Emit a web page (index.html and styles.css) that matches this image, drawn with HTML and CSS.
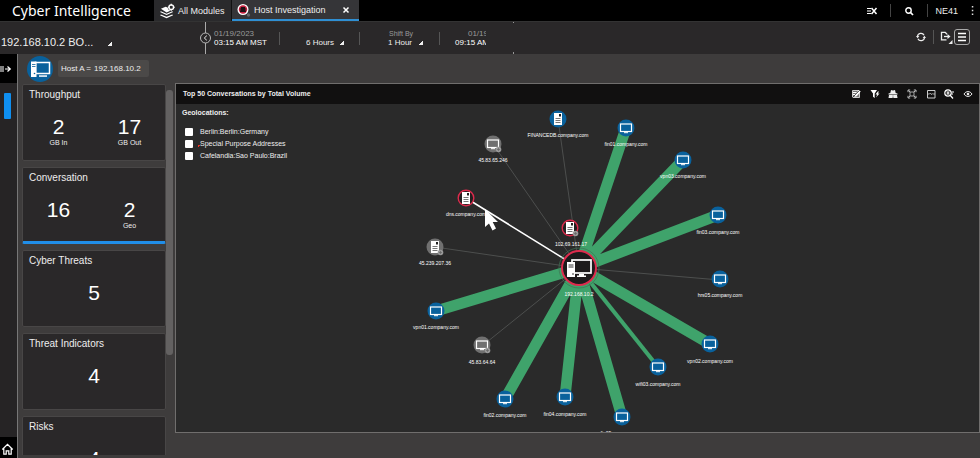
FILE: index.html
```html
<!DOCTYPE html>
<html lang="en">
<head>
<meta charset="utf-8">
<title>Cyber Intelligence</title>
<link rel="stylesheet" href="styles.css">
</head>
<body>
<div class="app">
  <header class="topbar">
    <h1 class="brand">Cyber Intelligence</h1>
    <nav class="tabs">
      <a class="tab" href="#modules">
        <svg class="tab-icon" viewBox="0 0 16 16"><path d="M1 5.500 6 3.500l2 .8a4 4 0 0 0 3.500 3.200L7 9.500zM1 8.300l6 2.600 6-2.600 1 .9-7 3.100-7-3.100zM1 11.600l6 2.600 6-2.600 1 .9L7 15.800 0 12.500z" fill="#fff"/><circle cx="12" cy="4" r="2.500" fill="none" stroke="#fff" stroke-width="1.500"/><path d="M12 .3v2M12 5.700v2M8.300 4h2M13.700 4h2" stroke="#fff" stroke-width="1.300"/></svg>
        <span>All Modules</span>
      </a>
      <a class="tab tab-current" href="#host">
        <svg class="host-icon" viewBox="0 0 14 14"><circle cx="6" cy="6.500" r="5.500" fill="#fff"/><circle cx="6" cy="6.500" r="4.200" fill="#c61f3f"/><path d="M3 9c0-1.300.5-2 1-2.300V4h4v2.700c.5.300 1 1 1 2.300z" fill="#1d1014"/><path d="M2.800 6h6.400" stroke="#1d1014"/><circle cx="11.500" cy="12" r="1.700" fill="#65656a"/></svg>
        <span>Host Investigation</span>
      </a>
      <button class="tab-close" aria-label="Close tab"><svg viewBox="0 0 8 8"><path d="m1.500 1.500 5 5m0-5-5 5" stroke="#fff" stroke-width="1.500"/></svg></button>
    </nav>
    <div class="top-actions">
      <button aria-label="Clear list"><svg class="i-clear" viewBox="0 0 12 8"><path d="M1 1.500h4M1 4h4M1 6.500h4" stroke="#fff" stroke-width="1.100"/><path d="m5.500 1 5 6m0-6-5 6" stroke="#fff" stroke-width="1.500"/></svg></button>
      <button class="search" aria-label="Search"><svg class="i10" viewBox="0 0 10 10"><circle cx="4.500" cy="4.500" r="2.700" fill="none" stroke="#fff" stroke-width="1.400"/><path d="m6.500 6.500 2.500 2.500" stroke="#fff" stroke-width="1.700"/></svg></button>
      <span class="user">NE41</span>
      <button class="kebab" aria-label="More"><svg viewBox="0 0 3 11"><path d="M.8 1h1.500v1.500H.8zM.8 4.700h1.500v1.500H.8zM.8 8.400h1.500v1.500H.8z" fill="#ddd"/></svg></button>
    </div>
  </header>

  <div class="toolbar">
    <select class="corner host-select" aria-label="Host"><option>192.168.10.2 BO...</option></select>
    <div class="timeline">
      <button class="time-back" aria-label="Earlier"><svg viewBox="0 0 12 32"><path d="M5.500 0v11M5.500 21v11" stroke="#aaa"/><circle cx="5.500" cy="16" r="5" fill="none" stroke="#bbb"/><path d="M6.800 13.700 4.300 16l2.500 2.300" fill="none" stroke="#eee"/></svg></button>
      <div class="stamp"><span>01/19/2023</span><b>03:15 AM MST</b></div>
      <div class="range"><select class="corner" aria-label="Duration"><option>6 Hours</option></select></div>
      <div class="range shift"><label for="shift">Shift By</label><select class="corner" id="shift"><option>1 Hour</option></select></div>
      <div class="stamp stamp-end"><div class="stamp-text"><span>01/19/2023</span><b>09:15 AM MST</b></div></div>
      <div class="time-edge"></div>
    </div>
    <div class="tool-actions">
      <button aria-label="Refresh"><svg class="i10" viewBox="0 0 10 10"><path d="M1.500 4.500a3.500 3.500 0 0 1 6.600-1.300M8.500 5.500a3.500 3.500 0 0 1-6.600 1.300" fill="none" stroke="#eee" stroke-width="1.200"/><path d="M0 4h3.300L1.600 6.300zM10 6H6.700l1.700-2.300z" fill="#eee"/></svg></button>
      <button class="export" aria-label="Export"><svg viewBox="0 0 13 14"><path d="M6.500 9.800H1.500v-7.500h3.700l1.800 2" fill="none" stroke="#eee" stroke-width="1.300"/><path d="M4 6.500h4.500" stroke="#eee" stroke-width="1.300"/><path d="m7.500 4 3 2.500-3 2.500zM12.500 10v4h-4z" fill="#eee"/></svg></button>
      <button class="menu" aria-label="Menu"><svg viewBox="0 0 10 10"><path d="M1 1.500h8M1 5h8M1 8.500h8" stroke="#fff" stroke-width="1.500"/></svg></button>
    </div>
  </div>

  <div class="workspace">
    <aside class="rail">
      <button class="rail-toggle" aria-label="Expand"><svg viewBox="0 0 12 8"><path d="M0 2h4M0 4h4M0 6h4" stroke="#fff" stroke-width="1.200"/><path d="M5 4h5M7.500 1.500 10.300 4 7.500 6.500" fill="none" stroke="#fff" stroke-width="1.200"/></svg></button>
      <span class="rail-mark"></span>
      <a class="rail-home" href="#home" aria-label="Home"><svg viewBox="0 0 12 12"><path d="M.8 6.500 6 1.300l5.200 5.200M2.300 5.500v5.700h2.400V7.800h2.600v3.400h2.400V5.500" fill="none" stroke="#fff" stroke-width="1.200"/></svg></a>
    </aside>

    <main class="main">
      <div class="crumbs">
        <svg class="crumb-icon" viewBox="0 0 26 26"><circle cx="13" cy="13" r="13" fill="#09619c"/><rect x="8.500" y="6.500" width="14" height="11" fill="#09619c" stroke="#fff" stroke-width="1.500"/><path d="M12 19.300h8v1.500h-8z" fill="#fff"/><path d="M4 5.500h5.500v15.500H4z" fill="#fff"/><path d="M5 8.500h3.500M5 10.500h3.500" stroke="#09619c" stroke-width=".8"/><circle cx="7.500" cy="17.500" r=".8" fill="#09619c"/></svg>
        <span class="chip"><span>Host A =</span><span>192.168.10.2</span></span>
      </div>

      <div class="content">
        <div class="cards">
          <section class="card"><h2>Throughput</h2><div class="figures"><div><strong>2</strong><small>GB In</small></div><div><strong>17</strong><small>GB Out</small></div></div></section>
          <section class="card card-active"><h2>Conversation</h2><div class="figures"><div><strong>16</strong></div><div><strong>2</strong><small>Geo</small></div></div></section>
          <section class="card"><h2>Cyber Threats</h2><div class="figures"><div><strong>5</strong></div></div></section>
          <section class="card"><h2>Threat Indicators</h2><div class="figures"><div><strong>4</strong></div></div></section>
          <section class="card"><h2>Risks</h2><div class="figures"><div><strong>4</strong></div></div></section>
        </div>
        <div class="scroll"><div class="thumb"></div></div>

        <section class="panel">
          <header class="panel-head">
            <h2>Top 50 Conversations by Total Volume</h2>
            <div class="panel-tools">
              <button aria-label="Edit"><svg class="i10" viewBox="0 0 10 10"><path d="M1.500 1.500h7v7h-7z" fill="#777" stroke="#ccc"/><path d="M2 3.500h3.500M2 5.500h2" stroke="#fff"/><path d="m3.500 8 .6-2.500L8 1l1.700 1.500-4 4.700z" fill="#fff"/><path d="M1 9 9 1" stroke="#222" stroke-width=".7"/></svg></button>
              <button aria-label="Filter"><svg class="i10" viewBox="0 0 10 10"><path d="M.5 1h6.500L4.700 4.500V9L3 7.700V4.500z" fill="#fff"/><path d="m7.800 2.500-2.300 3h1.700L6 8.500l3.500-4H7.800L9 2.500z" fill="#fff"/></svg></button>
              <button aria-label="Incognito"><svg class="i10" viewBox="0 0 10 10"><path d="M2.300 4 3 1l2 .6L7 1l.7 3 1.800.5v1h-9v-1zM1 6h3.700v3H.5zM5.300 6H9l.5 3H5.300zM4 6.500h2v1H4z" fill="#eee"/></svg></button>
              <button aria-label="Fit view"><svg class="i10" viewBox="0 0 10 10"><path d="M1 3.200V1h2.200M6.800 1H9v2.200M9 6.800V9H6.800M3.200 9H1V6.800M1.500 1.500l7 7M8.500 1.500l-7 7" fill="none" stroke="#bbb"/><path d="M3 3h4v4H3z" fill="#111" stroke="#ccc" stroke-width=".8"/></svg></button>
              <button aria-label="Chart"><svg class="i10" viewBox="0 0 10 10"><path d="M1.500 1.500h7.500v7.500H1.500z" fill="none" stroke="#ccc"/><path d="M1.500 5h2l1-1 1 1.700L6.500 4.700l.6.300h1.900" fill="none" stroke="#ccc" stroke-width=".8"/></svg></button>
              <button aria-label="Zoom"><svg class="i10" viewBox="0 0 10 10"><circle cx="4" cy="4" r="3.200" fill="none" stroke="#fff" stroke-width="1.200"/><path d="M2.500 3h3M2.500 5h3M4 2.500v3M7.500 3H10M7.500 5H9M6 6l3 3.500" stroke="#fff" stroke-width="1.200"/></svg></button>
              <button aria-label="Show"><svg class="i10" viewBox="0 0 10 10"><path d="M1 5c2-3.200 6-3.200 8 0-2 3.200-6 3.200-8 0z" fill="none" stroke="#eee"/><circle cx="5" cy="5" r="1.300" fill="#eee"/></svg></button>
            </div>
          </header>
          <div class="canvas">
            <svg class="graph" role="img" aria-label="Conversation graph">
              <defs>
                <g id="screen"><rect x="-5.500" y="-4" width="11" height="7.500" fill="none" stroke="#fff" stroke-width="1.200"/><path d="M-2 4.700h4" stroke="#fff"/></g>
                <g id="pc"><circle r="8.500" fill="#09619c"/><use href="#screen"/></g>
                <g id="file"><path d="M-4-6h8V6h-8z" fill="#fff"/><path d="M-2.500-.5h5M-2.500 1.500h5M-2.500 3.500h5" stroke="#666" stroke-width=".9"/><path d="M1-5h2v2.500H1z" fill="#222"/></g>
                <g id="badge"><circle cx="5.500" cy="5.500" r="2.800" fill="#999"/><path d="M4 5.500h3M5.500 4v3" stroke="#666" stroke-width=".7"/></g>
              </defs>
              <g transform="translate(-176 -104)">
                <g class="thin"><path d="M579 268 493 144M579 268 558 119M579 268 435 247M579 268 482 346M579 268 720 280"/></g>
                <g class="flow"><path d="M579 268 626 128M579 268 683 160M579 268 718 215M579 268 436 311M579 268 505 399M579 268 565 397M579 268 622 417M579 268 710 344"/><path class="flow-small" d="M579 268 658 367"/></g>
                <path d="M579 268 466 198" stroke="#fff" stroke-width="1.500"/>
                <circle cx="579" cy="268" r="20" fill="none" stroke="#3f7355" stroke-width=".7"/>
                <use href="#pc" x="626" y="128"/><use href="#pc" x="683" y="160"/><use href="#pc" x="718" y="215"/><use href="#pc" x="720" y="279"/><use href="#pc" x="710" y="344"/><use href="#pc" x="658" y="367"/><use href="#pc" x="622" y="417"/><use href="#pc" x="565" y="397"/><use href="#pc" x="505" y="399"/><use href="#pc" x="436" y="311"/>
                <g transform="translate(558 119)"><circle r="8.500" fill="#09619c"/><use href="#file"/></g>
                <g transform="translate(493 144)"><circle r="8.500" fill="#707070"/><use href="#screen"/><use href="#badge"/></g>
                <g transform="translate(482 345)"><circle r="8.500" fill="#707070"/><use href="#screen"/><use href="#badge"/></g>
                <g transform="translate(435 247)"><circle r="8.500" fill="#707070"/><use href="#file"/><use href="#badge"/></g>
                <g transform="translate(466 198)"><circle r="7.800" fill="#231f20" stroke="#de2b4d" stroke-width="1.400"/><use href="#file"/></g>
                <g transform="translate(570 228)"><circle r="7.800" fill="#231f20" stroke="#de2b4d" stroke-width="1.400"/><use href="#file"/><use href="#badge"/></g>
                <g transform="translate(579 268)"><circle r="17" fill="#1d1b1c" stroke="#de2b4d" stroke-width="2"/><rect x="-7" y="-8" width="19" height="13" fill="none" stroke="#fff" stroke-width="1.700"/><path d="M-2 7.500H7V9h-9zM0 6h5v1.500H0z" fill="#fff"/><path d="M-12-6h8V9h-8z" fill="#fff"/><path d="M-10.500-3h5M-10.500-1h5" stroke="#222" stroke-width=".9"/><circle cx="-6" cy="6" r=".8" fill="#222"/></g>
                <g class="names">
                  <text x="558" y="137">FINANCEDB.company.com</text>
                  <text x="493" y="162">45.83.65.246</text>
                  <text x="626" y="146">fin01.company.com</text>
                  <text x="683" y="178">vpn03.company.com</text>
                  <text x="718" y="234">fin03.company.com</text>
                  <text x="466" y="216">dns.company.com</text>
                  <text x="571" y="246">102.69.161.17</text>
                  <text x="435" y="265">45.239.207.36</text>
                  <text x="720" y="297">hrs05.company.com</text>
                  <text x="579" y="296">192.168.10.2</text>
                  <text x="436" y="329">vpn01.company.com</text>
                  <text x="482" y="364">45.83.64.64</text>
                  <text x="710" y="363">vpn02.company.com</text>
                  <text x="658" y="386">wifi03.company.com</text>
                  <text x="505" y="417">fin02.company.com</text>
                  <text x="565" y="416">fin04.company.com</text>
                  <text x="622" y="435">fin05.company.com</text>
                </g>
                <path d="M485 209v18l4-3.500 3.500 7 3.500-2-3.300-6.500h5.300z" fill="#fff"/>
              </g>
            </svg>
            <fieldset class="geo">
              <legend>Geolocations:</legend>
              <label><input type="checkbox"><span>Berlin:Berlin:Germany</span></label>
              <label class="flagged"><input type="checkbox"><span>Special Purpose Addresses</span></label>
              <label><input type="checkbox"><span>Cafelandia:Sao Paulo:Brazil</span></label>
            </fieldset>
          </div>
        </section>
      </div>
    </main>
  </div>
</div>
</body>
</html>
```
FILE: styles.css
```css
* { box-sizing: border-box; }
body { margin: 0; background: #3e3c3c; color: #eee; font: 8px/12px "Liberation Sans", Arial, sans-serif; }
h1, h2 { margin: 0; font-weight: normal; }
button, select { font: inherit; color: inherit; background: none; border: 0; padding: 0; margin: 0; }
button { display: flex; align-items: center; justify-content: center; }
a { color: inherit; text-decoration: none; }
svg { display: block; }
select { appearance: none; }

.app { display: flex; flex-direction: column; height: 100vh; overflow: hidden; }

/* Top bar */
.topbar { display: flex; flex: none; height: 22px; background: #000; border-bottom: 1px solid #333; }
.brand { width: 154px; padding-left: 12px; font: 14px/22px "Noto Sans", "Open Sans", sans-serif; white-space: nowrap; color: #fff; }
.tabs { display: flex; font-size: 9px; background: #2a2a2c; }
.tab { display: flex; align-items: center; gap: 3px; width: 78px; padding-left: 6px; border-right: 1px solid #111; white-space: nowrap; }
.tab-icon { width: 15px; height: 16px; }
.tab-current { width: 104px; padding-left: 5px; gap: 3px; border-right: 0; background: #353538; border-bottom: 2px solid #2f8fd3; }
.host-icon { width: 14px; height: 14px; }
.tab-close { width: 23px; background: #353538; border-bottom: 2px solid #2f8fd3; }
.tab-close svg { width: 8px; height: 8px; margin-right: 4px; }
.top-actions { display: flex; align-items: center; margin-left: auto; font-size: 9px; }
.i-clear { width: 12px; height: 8px; margin-right: 12px; }
.i10 { width: 10px; height: 10px; }
.search { width: 38px; height: 13px; border: solid #444; border-width: 0 1px; }
.user { padding-left: 7px; }
.kebab { width: 22px; padding-left: 6px; }
.kebab svg { width: 3px; height: 11px; }

/* Toolbar */
.toolbar { display: flex; flex: none; height: 32px; background: #2a2829; }
.corner { padding-right: 9px; background: linear-gradient(135deg, transparent 50%, #eee 50%) right 3px / 4px 4px no-repeat; }
.host-select { width: 111px; height: 16px; margin: 12px 88px 0 1px; font-size: 11px; background-position: right 8px; }
.timeline { display: flex; align-items: center; }
.time-back svg { width: 12px; height: 32px; }
.stamp { width: 67px; padding-left: 2px; line-height: 9px; white-space: nowrap; }
.stamp span, .stamp b { display: block; }
.stamp span, .shift label { color: #999; }
.stamp b { font-weight: normal; color: #fff; }
.range { display: flex; flex-direction: column; justify-content: flex-end; align-items: flex-start; height: 26px; padding: 0 0 3px 27px; width: 80px; line-height: 9px; background: linear-gradient(#555, #555) left center / 1px 13px no-repeat; }
.range select { width: 38px; height: 10px; line-height: 10px; }
.shift { padding-left: 29px; }
.shift select { width: 35px; }
.shift label { font-size: 7px; padding-left: 1px; }
.stamp-end { width: 47px; padding-left: 16px; overflow: hidden; background: linear-gradient(#555, #555) left center / 1px 13px no-repeat; }
.stamp-text { width: 53px; text-align: right; }
.time-edge { width: 28px; height: 32px; background: linear-gradient(#999, #999) right top / 1px 1px no-repeat, linear-gradient(#999, #999) right bottom / 1px 2px no-repeat; }
.tool-actions { display: flex; align-items: center; margin: 0 10px 0 auto; padding-bottom: 2px; }
.export { margin-left: 7px; padding-left: 6px; border-left: 1px solid #555; }
.export svg { width: 13px; height: 14px; }
.menu { width: 16px; height: 16px; margin-left: 1px; border: 1px solid #aaa; border-radius: 3px; }
.menu svg { width: 10px; height: 10px; }

/* Left rail */
.workspace { display: flex; flex: 1; min-height: 0; }
.rail { display: flex; flex: none; flex-direction: column; width: 18px; background: #262425; border-right: 1px solid #777; }
.rail-toggle { height: 29px; background: #000; justify-content: flex-start; }
.rail-toggle svg { width: 12px; height: 8px; }
.rail-mark { width: 7px; height: 26px; margin: 10px 0 0 4px; background: #0f8ff0; border-radius: 1px; }
.rail-home { margin-top: auto; padding: 6px 0 3px 1px; background: #000; }
.rail-home svg { width: 13px; height: 12px; }

/* Main area */
.main { display: flex; flex: 1; flex-direction: column; min-width: 0; padding-left: 4px; }
.crumbs { display: flex; flex: none; align-items: center; gap: 5px; height: 29px; padding-left: 5px; }
.crumb-icon { width: 26px; height: 26px; }
.chip { display: flex; align-items: center; gap: 3px; width: 91px; height: 17px; padding-left: 3px; border-radius: 2px; background: #4b4948; white-space: nowrap; }
.content { display: flex; flex: 1; min-height: 0; }
.cards { display: flex; flex: none; flex-direction: column; gap: 6px; width: 144px; margin-bottom: 3px; padding-top: 1px; overflow: hidden; }
.card { flex: none; height: 77px; padding: 3px 0 0; background: #2a2829; border: 1px solid #484646; border-radius: 2px; }
.card-active { border-bottom: 3px solid #208ee8; }
.card h2 { padding-left: 6px; font-size: 10px; line-height: 14px; }
.figures { display: grid; grid-auto-flow: column; grid-auto-columns: 1fr; padding-top: 13px; text-align: center; }
.figures strong, .figures small { display: block; font-weight: normal; }
.figures strong { font-size: 21px; line-height: 24px; color: #fff; }
.figures small { font-size: 7px; line-height: 8px; }
.scroll { flex: none; width: 9px; padding-top: 7px; }
.thumb { width: 7px; height: 72%; border-radius: 3px; background: #636161; }

/* Graph panel */
.panel { display: flex; flex: 1; flex-direction: column; min-width: 0; margin-bottom: 25px; background: #2a2a2a; border: 1px solid #706e6d; }
.panel-head { display: flex; align-items: center; justify-content: space-between; flex: none; height: 20px; padding: 0 6px 0 7px; background: #111010; }
.panel-head h2 { font-size: 7px; font-weight: bold; }
.panel-tools { display: flex; justify-content: space-between; width: 122px; }
.canvas { position: relative; flex: 1; min-height: 0; overflow: hidden; }
.graph { position: absolute; inset: 0; width: 100%; height: 100%; }
.thin { stroke: #5c5f5d; stroke-width: .7; }
.flow { stroke: #3fa36b; stroke-width: 11; }
.flow-small { stroke-width: 4; }
.names { fill: #fff; font-size: 5px; text-anchor: middle; }
.geo { position: relative; width: 160px; margin: 0; padding: 6px 0 0 9px; border: 0; font-size: 7px; }
.geo legend { float: left; width: 100%; margin: -3px 0 7px -3px; padding: 0; font-weight: bold; }
.geo label { display: flex; align-items: center; gap: 7px; clear: both; height: 12px; white-space: nowrap; }
.geo input { appearance: none; width: 8px; height: 8px; margin: 0; background: #fff; border-radius: 1px; }
.flagged { background: radial-gradient(circle, #e32 1px, transparent 1px) 12px 6px / 3px 3px no-repeat; }
```
